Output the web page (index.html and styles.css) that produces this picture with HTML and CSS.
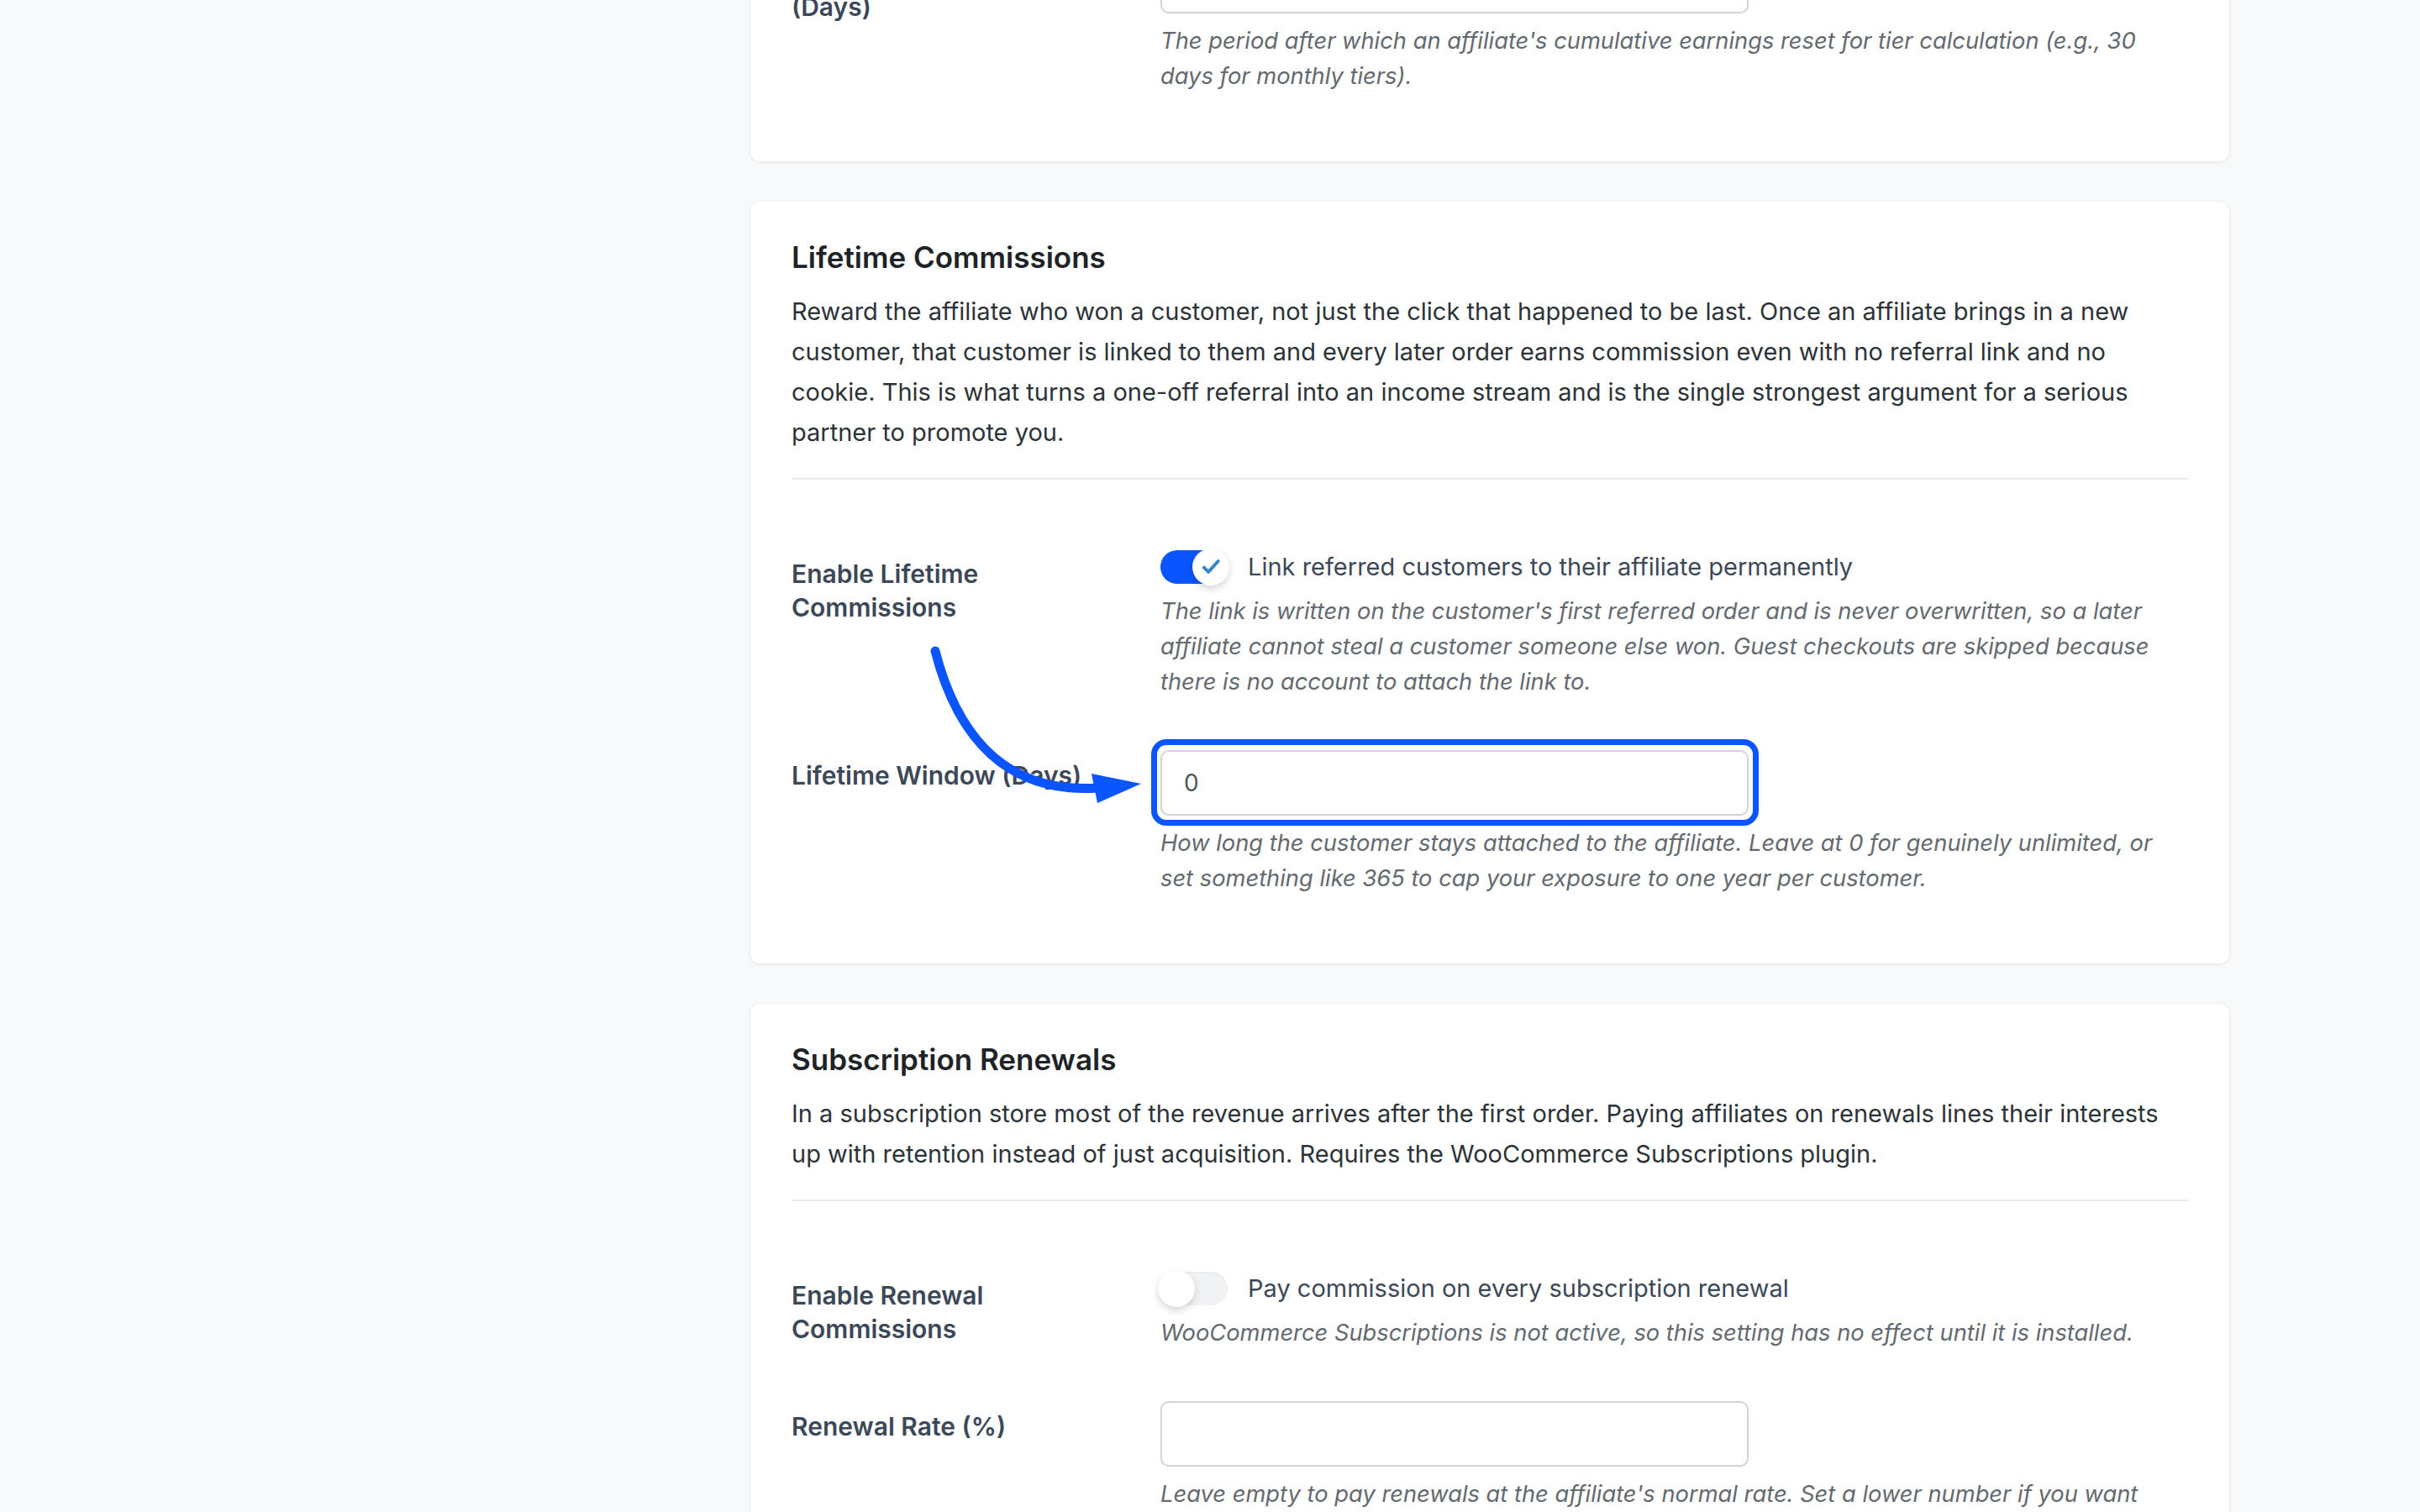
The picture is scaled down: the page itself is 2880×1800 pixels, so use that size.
FILE: index.html
```html
<!DOCTYPE html>
<html lang="en">
<head>
<meta charset="utf-8">
<title>Affiliate Settings</title>
<link rel="stylesheet" href="styles.css">
</head>
<body>
<div class="page">
  <main class="content">
    <section class="card">
      <div class="row">
        <div class="row-label">Cumulative Tier Period (Days)</div>
        <div class="row-field">
          <div class="input-wrap"><input class="text-input" type="text" value=""></div>
          <p class="help">The period after which an affiliate's cumulative earnings reset for tier calculation (e.g., 30 days for monthly tiers).</p>
        </div>
      </div>
    </section>

    <section class="card">
      <h2 class="card-title">Lifetime Commissions</h2>
      <p class="card-desc">Reward the affiliate who won a customer, not just the click that happened to be last. Once an affiliate brings in a new customer, that customer is linked to them and every later order earns commission even with no referral link and no cookie. This is what turns a one-off referral into an income stream and is the single strongest argument for a serious partner to promote you.</p>
      <div class="divider"></div>
      <div class="rows">
        <div class="row">
          <div class="row-label">Enable Lifetime Commissions</div>
          <div class="row-field">
            <div class="toggle-line">
              <span class="switch switch-on">
                <span class="knob">
                  <svg class="check" viewBox="0 0 24 24" width="28" height="28"><path d="M5 12.5l4.5 4.6L19.5 6" fill="none" stroke="#3a84c9" stroke-width="3.4" stroke-linecap="round" stroke-linejoin="round"/></svg>
                </span>
              </span>
              <span class="toggle-text">Link referred customers to their affiliate permanently</span>
            </div>
            <p class="help help-tight">The link is written on the customer's first referred order and is never overwritten, so a later affiliate cannot steal a customer someone else won. Guest checkouts are skipped because there is no account to attach the link to.</p>
          </div>
        </div>
        <div class="row">
          <div class="row-label">Lifetime Window (Days)</div>
          <div class="row-field">
            <div class="input-wrap">
              <input class="text-input" type="text" value="0">
              <span class="highlight"></span>
            </div>
            <p class="help">How long the customer stays attached to the affiliate. Leave at 0 for genuinely unlimited, or set something like 365 to cap your exposure to one year per customer.</p>
          </div>
        </div>
      </div>
    </section>

    <section class="card">
      <h2 class="card-title">Subscription Renewals</h2>
      <p class="card-desc">In a subscription store most of the revenue arrives after the first order. Paying affiliates on renewals lines their interests up with retention instead of just acquisition. Requires the WooCommerce Subscriptions plugin.</p>
      <div class="divider"></div>
      <div class="rows">
        <div class="row">
          <div class="row-label">Enable Renewal Commissions</div>
          <div class="row-field">
            <div class="toggle-line">
              <span class="switch switch-off"><span class="knob"></span></span>
              <span class="toggle-text">Pay commission on every subscription renewal</span>
            </div>
            <p class="help help-tight">WooCommerce Subscriptions is not active, so this setting has no effect until it is installed.</p>
          </div>
        </div>
        <div class="row">
          <div class="row-label">Renewal Rate (%)</div>
          <div class="row-field">
            <div class="input-wrap"><input class="text-input" type="text" value=""></div>
            <p class="help">Leave empty to pay renewals at the affiliate's normal rate. Set a lower number if you want renewals to earn less than the first order.</p>
          </div>
        </div>
      </div>
    </section>
  </main>

  <svg class="annot-arrow" viewBox="1090 760 290 210" width="290" height="210" aria-hidden="true">
    <path d="M1113 775 C1140 880 1200 945 1306 938" fill="none" stroke="#0a55ff" stroke-width="11" stroke-linecap="round"/>
    <polygon points="1299,921 1358,933 1306,956" fill="#0a55ff"/>
  </svg>
</div>
</body>
</html>
```

FILE: styles.css
```css
* { box-sizing: border-box; }

html, body {
  margin: 0;
  padding: 0;
}

body {
  background: #f8f9fb;
  font-family: Inter, "Noto Sans", "Liberation Sans", sans-serif;
  color: #2c3338;
  overflow: hidden;
}

.page {
  position: relative;
  width: 2880px;
  height: 1800px;
  overflow: hidden;
}

.content {
  display: flex;
  flex-direction: column;
  gap: 48px;
  width: 1760px;
  margin: -135px 0 0 893px;
}

.card {
  background: #ffffff;
  border-radius: 12px;
  padding: 43px 48px 50px 49px;
  box-shadow: 0 2px 4px rgba(16, 24, 40, 0.04), 0 0 0 2px rgba(16, 24, 40, 0.02);
}

.card-title {
  margin: 0;
  font-size: 35px;
  line-height: 46px;
  font-weight: 600;
  color: #1d2327;
}

.card-desc {
  margin: 18px 0 0;
  font-size: 29px;
  line-height: 48px;
  color: #2c3338;
}

.divider {
  margin-top: 30px;
  height: 2px;
  background: #e9eaec;
}

.rows {
  margin-top: 52px;
}

.row {
  display: grid;
  grid-template-columns: 439px 1fr;
}

.row-label {
  padding: 40px 40px 0 0;
  font-size: 30px;
  line-height: 40px;
  font-weight: 600;
  color: #3c4858;
}

.row-field {
  padding: 30px 0;
}

.toggle-line {
  display: flex;
  align-items: center;
  gap: 24px;
  height: 44px;
}

.switch {
  position: relative;
  flex: none;
  width: 80px;
  height: 40px;
  border-radius: 20px;
}

.switch-on { background: #0a55ff; }

.switch-off {
  background: #f1f2f4;
  box-shadow: inset 0 1px 3px rgba(0, 0, 0, 0.05);
}

.knob {
  position: absolute;
  top: -2px;
  width: 44px;
  height: 44px;
  border-radius: 50%;
  background: #ffffff;
  box-shadow: 0 4px 9px rgba(0, 0, 0, 0.16);
  display: flex;
  align-items: center;
  justify-content: center;
}

.switch-on .knob { right: -2px; }
.switch-off .knob { left: -3px; }

.check { display: block; }

.toggle-text {
  font-size: 29px;
  line-height: 40px;
  color: #3c4858;
}

.help {
  margin: 12px 0 0;
  font-size: 27.3px;
  line-height: 42px;
  font-style: italic;
  color: #646970;
}

.help-tight { margin-top: 10px; }

.input-wrap {
  position: relative;
  width: 700px;
}

.text-input {
  display: block;
  width: 700px;
  height: 78px;
  margin: 0;
  padding: 0 26px;
  border: 2px solid #d2d4d8;
  border-radius: 10px;
  background: #ffffff;
  box-shadow: 0 1px 2px rgba(0, 0, 0, 0.04);
  font-family: Inter, "Noto Sans", "Liberation Sans", sans-serif;
  font-size: 28px;
  color: #50575e;
  outline: none;
}

.highlight {
  position: absolute;
  top: -13px;
  bottom: -12px;
  left: -11px;
  right: -12px;
  border: 7px solid #0a55ff;
  border-radius: 18px;
  pointer-events: none;
}

.annot-arrow {
  position: absolute;
  left: 1090px;
  top: 760px;
  pointer-events: none;
}
```
